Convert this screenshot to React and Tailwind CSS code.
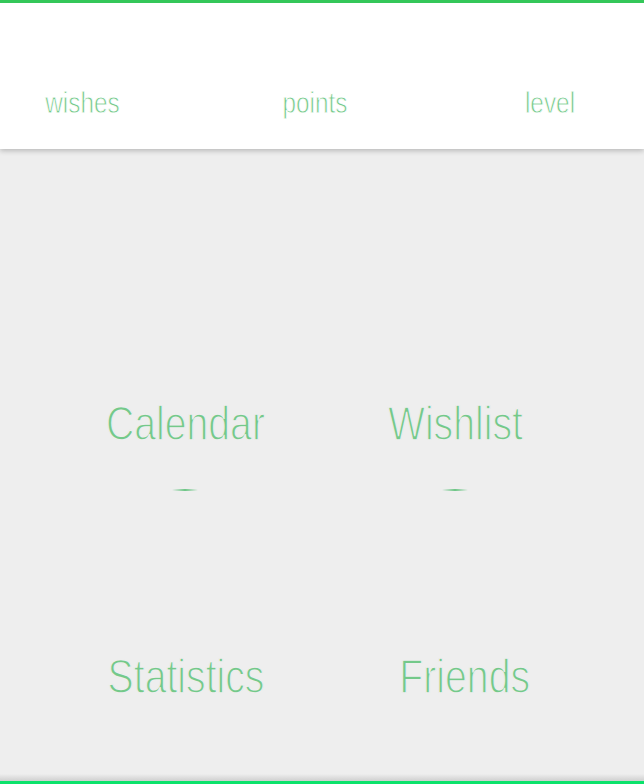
import React from "react";

const font = { fontFamily: "'Liberation Sans', Arial, sans-serif" };

function Big({ children }) {
  return (
    <span className="inline-block origin-center scale-x-[0.8] text-[49px] leading-none text-[#74c98a] [-webkit-text-stroke:1.4px_#eeeeee]">
      {children}
    </span>
  );
}

function Small({ children }) {
  return (
    <span className="inline-block origin-center scale-x-[0.84] text-[29px] leading-none text-[#74c98a] [-webkit-text-stroke:0.8px_#ffffff]">
      {children}
    </span>
  );
}

function Dash() {
  return (
    <div className="mt-[41px] h-[2px] w-[26px] rounded-full bg-gradient-to-r from-transparent via-[#6cc585] to-transparent" />
  );
}

export default function App() {
  return (
    <div className="flex h-[784px] w-full flex-col bg-[#eeeeee]" style={font}>
      <header className="relative z-10 h-[149px] shrink-0 border-t-[3px] border-[#34c759] bg-white shadow-[0_2px_5px_rgba(0,0,0,0.22)]">
        <div className="grid grid-cols-[165px_300px_170px] pt-[86px] text-center">
          <Small>wishes</Small>
          <Small>points</Small>
          <Small>level</Small>
        </div>
      </header>
      <main className="flex flex-1 flex-col">
        <div className="flex pt-[250px]">
          <div className="flex w-[370px] flex-col items-center">
            <Big>Calendar</Big>
            <Dash />
          </div>
          <div className="flex w-[170px] flex-col items-center">
            <Big>Wishlist</Big>
            <Dash />
          </div>
        </div>
        <div className="flex pt-[161px]">
          <div className="flex w-[372px] flex-col items-center">
            <Big>Statistics</Big>
          </div>
          <div className="flex w-[186px] flex-col items-center">
            <Big>Friends</Big>
          </div>
        </div>
      </main>
      <div className="h-[7px] shrink-0 bg-gradient-to-b from-[#eeeeee] to-[#cfcfcf]" />
      <div className="h-[3px] shrink-0 bg-[#0be26b]" />
    </div>
  );
}
